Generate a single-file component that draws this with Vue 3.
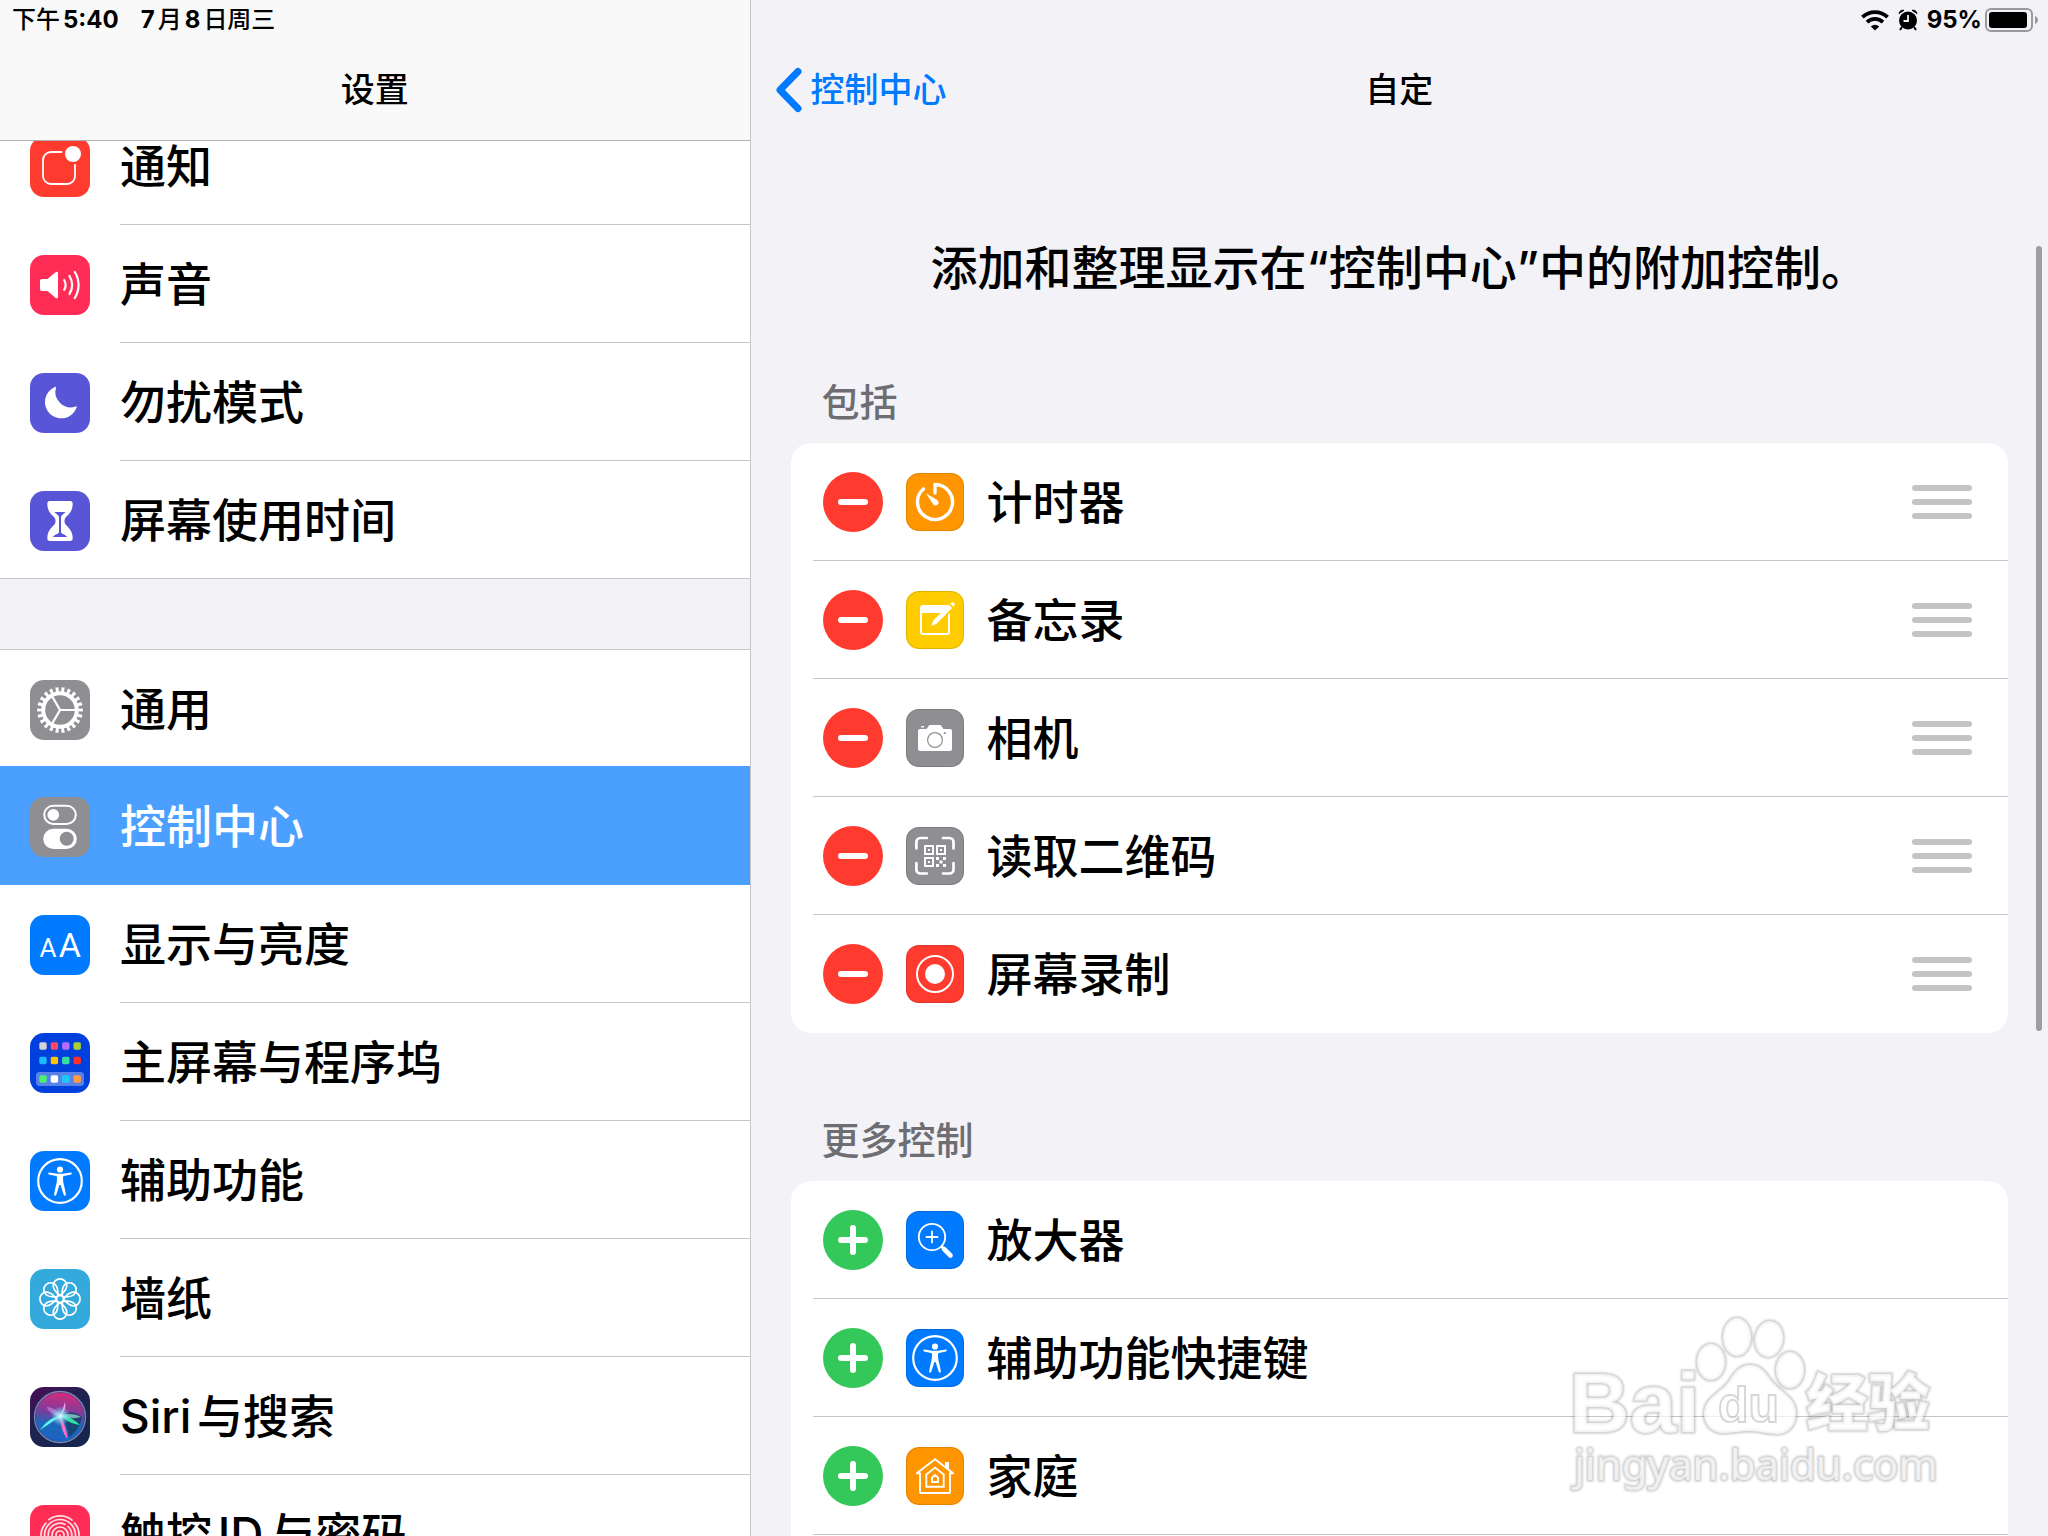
<!-- Settings, split view: category list on the left, the Control Center
     "customize" page on the right. -->
<template>
  <div class="settings">
    <aside class="sidebar">
      <header class="side-head">
        <div class="status">
          <span>下午<b>5:40</b></span>
          <span><b>7</b>月<b>8</b>日周三</span>
        </div>
        <h1 class="nav-title">设置</h1>
      </header>

      <nav class="side-scroll">
        <ul v-for="(group, i) in groups" :key="i" class="side-group">
          <li v-for="item in group" :key="item.icon">
            <a
              href="#"
              class="side-row"
              :class="{ 'side-row--active': item.icon === active }"
              @click.prevent="active = item.icon"
            >
              <svg class="side-icon" viewBox="0 0 60 60" aria-hidden="true" v-html="sideIcons[item.icon]" />
              <span class="side-label">{{ item.label }}</span>
            </a>
          </li>
        </ul>
      </nav>
    </aside>

    <main class="detail">
      <header class="detail-head">
        <div class="status status--right">
          <svg width="28" height="22" viewBox="0 0 28 22" aria-hidden="true">
            <g fill="none" stroke="#000" stroke-width="3.8">
              <path d="M1.4 8.2a18 18 0 0 1 25.2 0" />
              <path d="M6 13.200a11.400 11.400 0 0 1 16 0" />
            </g>
            <path d="M14 21.6l-4.2-4.2a6 6 0 0 1 8.400 0z" />
          </svg>
          <svg class="alarm" width="20" height="22" viewBox="0 0 20 22" aria-hidden="true">
            <circle cx="10" cy="11.500" r="9" />
            <path d="M1 4.500a4 4 0 0 1 5-3.200zM19 4.500a4 4 0 0 0-5-3.200z" stroke="#000" stroke-width="1" />
            <path d="M4 18l-2 3M16 18l2 3" stroke="#000" stroke-width="2" />
            <path d="M10 6v6H5.500" fill="none" stroke="#f2f2f7" stroke-width="1.800" />
          </svg>
          <b>95%</b>
          <svg width="53" height="24" viewBox="0 0 53 24" aria-hidden="true">
            <rect x="1" y="1" width="46" height="22" rx="5" fill="none" stroke="#9a9a9e" stroke-width="2" />
            <rect x="4" y="4" width="38" height="16" rx="3" />
            <path d="M50 8c2 .8 3 2.200 3 4s-1 3.200-3 4z" fill="#9a9a9e" />
          </svg>
        </div>
        <div class="nav-bar">
          <button type="button" class="back">
            <svg width="28" height="46" viewBox="0 0 28 46" aria-hidden="true">
              <path d="M23 4.500L5 23l18 18.500" fill="none" stroke="#007aff" stroke-width="7" stroke-linecap="round" stroke-linejoin="round" />
            </svg>
            控制中心
          </button>
          <h2 class="nav-title">自定</h2>
        </div>
      </header>

      <p class="intro">添加和整理显示在“控制中心”中的附加控制。</p>

      <section v-for="section in sections" :key="section.title" class="section">
        <h3 class="section-title">{{ section.title }}</h3>
        <ul class="card">
          <li v-for="item in section.items" :key="item.icon" class="card-row">
            <button
              type="button"
              class="toggle"
              :class="section.included ? 'toggle--remove' : 'toggle--add'"
              :aria-label="(section.included ? '移除' : '添加') + item.label"
            />
            <svg class="card-icon" viewBox="0 0 58 58" aria-hidden="true" v-html="controlIcons[item.icon]" />
            <span class="card-label">{{ item.label }}</span>
            <button v-if="section.included" type="button" class="grip" :aria-label="'移动' + item.label">
              <i /><i /><i />
            </button>
          </li>
        </ul>
      </section>

      <div class="scrollbar" />

      <svg class="watermark" width="400" height="190" viewBox="0 0 400 190" aria-hidden="true">
        <defs>
          <filter id="soft" x="-5%" y="-5%" width="110%" height="110%">
            <feGaussianBlur stdDeviation="1" />
          </filter>
          <g id="mark">
            <text x="9" y="127" class="wm-latin" font-size="84">Bai</text>
            <ellipse cx="151" cy="57" rx="14" ry="18" />
            <ellipse cx="177" cy="32" rx="14" ry="19" />
            <ellipse cx="209" cy="34" rx="14" ry="18" transform="rotate(8 209 34)" />
            <ellipse cx="230" cy="65" rx="14" ry="18" />
            <path d="M190 60c-11 0-16 8-21 16-7 11-25 16-25 33 0 11 8 19 19 19 10 0 17-2 27-2s16 3 27 3c12 0 19-9 19-21 0-16-16-21-25-33-6-8-10-15-21-15z" />
            <text x="246" y="121" class="wm-cjk" font-size="62">经验</text>
            <text x="14" y="175" class="wm-url" font-size="42">jingyan.baidu.com</text>
          </g>
        </defs>
        <use href="#mark" fill="none" stroke="#000" stroke-opacity=".22" stroke-width="3" filter="url(#soft)" />
        <use href="#mark" fill="#fff" fill-opacity=".7" />
        <text x="158" y="117" class="wm-latin" font-size="50" fill="#fff" fill-opacity=".6" stroke="#000" stroke-opacity=".16" stroke-width="2">du</text>
      </svg>
    </main>
  </div>
</template>

<script setup>
import { ref } from 'vue'

const active = ref('control')

const groups = [
  [
    { icon: 'notify', label: '通知' },
    { icon: 'sound', label: '声音' },
    { icon: 'moon', label: '勿扰模式' },
    { icon: 'time', label: '屏幕使用时间' },
  ],
  [
    { icon: 'general', label: '通用' },
    { icon: 'control', label: '控制中心' },
    { icon: 'display', label: '显示与亮度' },
    { icon: 'home', label: '主屏幕与程序坞' },
    { icon: 'access', label: '辅助功能' },
    { icon: 'wallpaper', label: '墙纸' },
    { icon: 'siri', label: 'Siri与搜索' },
    { icon: 'touch', label: '触控ID与密码' },
  ],
]

const sections = [
  {
    title: '包括',
    included: true,
    items: [
      { icon: 'timer', label: '计时器' },
      { icon: 'notes', label: '备忘录' },
      { icon: 'camera', label: '相机' },
      { icon: 'qr', label: '读取二维码' },
      { icon: 'record', label: '屏幕录制' },
    ],
  },
  {
    title: '更多控制',
    included: false,
    items: [
      { icon: 'magnifier', label: '放大器' },
      { icon: 'access', label: '辅助功能快捷键' },
      { icon: 'house', label: '家庭' },
      { icon: 'stopwatch', label: '' },
    ],
  },
]

const tile = (color, art) => `<rect width="60" height="60" rx="14" fill="${color}"/>${art}`
const smallTile = (color, art) =>
  `<rect width="58" height="58" rx="13" fill="${color}"/>` +
  `<rect x=".5" y=".5" width="57" height="57" rx="12.5" fill="none" stroke="#000" stroke-opacity=".12"/>${art}`

const person =
  '<circle cx="30" cy="30" r="21.800" fill="none" stroke="#fff" stroke-width="2.200"/>' +
  '<circle cx="30" cy="18.500" r="3.100" fill="#fff"/>' +
  '<path fill="#fff" d="M19.300 21.500l8 1.300h5.400l8-1.300c1.200-.2 1.500 1.600.3 1.900l-7 1.700c-.8.2-1 .6-1 1.400 0 4 .5 6 1.300 9l1.600 7.800c.3 1.500-1.700 1.900-2.200.5L30.600 34h-1.200l-3.100 9.800c-.5 1.400-2.500 1-2.200-.5l1.600-7.800c.8-3 1.300-5 1.300-9 0-.8-.2-1.200-1-1.400l-7-1.700c-1.200-.3-.9-2.100.3-1.900z"/>'

// home screen miniature: three rows of four apps, the last one in the dock
const apps = [
  [9.3, ['#d4d4d4', '#ff4b61', '#b66dff', '#a9d130']],
  [23.8, ['#1cb8ff', '#ffc400', '#3edc9c', '#ff3126']],
  [42.3, ['#4cf070', '#ffffff', '#1bcbff', '#ff9c42']],
]
const appDots = apps
  .map(([y, row]) => row.map((c, i) => `<rect x="${9.3 + i * 11.4}" y="${y}" width="7.400" height="7.400" rx="1.700" fill="${c}"/>`).join(''))
  .join('')

const petals = Array.from({ length: 8 }, (_, i) =>
  `<path transform="rotate(${i * 45} 30 30)" d="M30 26.500c-4.500-3.500-6.800-6.500-6.800-10a6.800 6.600 0 0 1 13.600 0c0 3.500-2.300 6.500-6.800 10z"/>`
).join('')

const sideIcons = {
  notify: tile('#ff3b30',
    '<path d="M32.300 15H21a8 8 0 0 0-8 8v16a8 8 0 0 0 8 8h16a8 8 0 0 0 8-8V27.300" fill="none" stroke="#fff" stroke-width="1.800"/>' +
    '<circle cx="43" cy="17" r="8" fill="#fff"/>'),
  sound: tile('#ff2d55',
    '<path fill="#fff" d="M12 24h5.500l8-6.800c1.300-1 2.500-.6 2.500.8v24c0 1.400-1.200 1.800-2.500.8l-8-6.800H12c-1.300 0-2-.7-2-2v-8c0-1.300.7-2 2-2z"/>' +
    '<g fill="none" stroke="#fff" stroke-width="2.200" stroke-linecap="round"><path d="M34.200 25.200c1.800 3 1.800 6.600 0 9.600"/><path d="M39.500 21c3.200 5.500 3.200 12.500 0 18"/><path d="M44.800 17c5 8 5 18 0 26"/></g>'),
  moon: tile('#5856d6',
    '<path fill="#fff" d="M25 14a16.300 16.300 0 1 0 21.600 20.500c.3-1-.2-1.400-1-1A15.400 15.400 0 0 1 26 14.600c.3-.8-.2-1-1-.6z"/>'),
  time: tile('#5856d6',
    '<path fill="#fff" d="M20 10h20c2 0 2.700 1.200 2.700 3 0 5-2 8.500-5.700 12-2 2-2.500 3-2.500 5s.5 3 2.500 5c3.700 3.500 5.700 7 5.700 12 0 1.800-.7 3-2.700 3H20c-2 0-2.700-1.200-2.700-3 0-5 2-8.500 5.700-12 2-2 2.500-3 2.500-5s-.5-3-2.500-5c-3.700-3.500-5.700-7-5.700-12 0-1.800.7-3 2.700-3z"/>' +
    '<path fill="#5856d6" d="M24.500 21h11c-.6 1.500-4.200 2.500-4.500 5v15.500c1 1.800 5 2.200 6 4.500H23c1-2.300 5-2.700 6-4.500V26c-.3-2.500-3.900-3.500-4.500-5z"/>'),
  general: tile('#8e8e93',
    '<g fill="none" stroke="#fff"><circle cx="30" cy="30" r="20.300" stroke-width="5.200" pathLength="220" stroke-dasharray="5.200 4.800" stroke-dashoffset="2.600"/>' +
    '<circle cx="30" cy="30" r="16.800" stroke-width="4"/><path stroke-width="2.200" d="M30 30h16M30 30l-8-13.900M30 30l-8 13.900"/></g>'),
  control: tile('#8e8e93',
    '<rect x="14.200" y="8.700" width="31.600" height="18.200" rx="9.100" fill="none" stroke="#fff" stroke-width="2"/><circle cx="23.300" cy="17.800" r="5.900" fill="#fff"/>' +
    '<rect x="13.200" y="31.700" width="33.600" height="20.200" rx="10.100" fill="#fff"/><circle cx="36.700" cy="41.800" r="7" fill="#8e8e93"/>'),
  display: tile('#007aff',
    '<g fill="#fff" font-family="Roboto, sans-serif" font-weight="400"><text x="9.500" y="42.300" font-size="26">A</text><text x="28.800" y="42.300" font-size="34">A</text></g>'),
  home: tile('#0040dd', '<rect x="6" y="39" width="48" height="14" rx="3.500" fill="#fff" fill-opacity=".35"/>' + appDots),
  access: tile('#007aff', person),
  wallpaper: tile('#34aadc', `<g fill="none" stroke="#fff" stroke-width="1.700">${petals}<circle cx="30" cy="30" r="3.500"/></g>`),
  siri:
    '<defs><linearGradient id="siri-bg" x1="0" y1="0" x2=".7" y2="1"><stop stop-color="#4a0d55"/><stop offset=".5" stop-color="#1d2350"/><stop offset="1" stop-color="#16264e"/></linearGradient>' +
    '<linearGradient id="siri-orb" x1=".5" y1="0" x2=".4" y2="1"><stop stop-color="#d42a7d"/><stop offset=".4" stop-color="#7a3d9b"/><stop offset=".65" stop-color="#1c67b8"/><stop offset="1" stop-color="#1c63c4"/></linearGradient>' +
    '<radialGradient id="siri-glow"><stop stop-color="#fff"/><stop offset=".3" stop-color="#9ff5ff" stop-opacity=".8"/><stop offset="1" stop-color="#6fd8ff" stop-opacity="0"/></radialGradient></defs>' +
    '<rect width="60" height="60" rx="14" fill="url(#siri-bg)"/><circle cx="30" cy="30" r="25.500" fill="#27386b" stroke="#7c88b5" stroke-width="1.300"/>' +
    '<circle cx="30" cy="30" r="24.500" fill="url(#siri-orb)"/>' +
    '<path d="M31 29c8-6 16-3 21 1-2 10-7 16-13 20-1-8-3-14-8-21z" fill="#16395e" fill-opacity=".75"/>' +
    '<path d="M31 29L10 43c5-7 11-13 21-14z" fill="#58f3ee"/><path d="M31 28c7 1 14 5 19 10-8-1-14-4-19-10z" fill="#2fe3a0"/>' +
    '<path d="M31 28c9-2 15-1 20 2-8 2-14 2-20-2z" fill="#8fe6d8" fill-opacity=".7"/>' +
    '<path d="M30 29c4 7 7 14 7.500 23-5-6-7-14-7.500-23z" fill="#ff6cc0"/><path d="M31 28l4-13c1 5 0 9-4 13z" fill="#f3a4e0"/><path d="M30 29c-3-6-8-9-13-9 1 5 6 8 13 9z" fill="#b878d8" fill-opacity=".8"/>' +
    '<circle cx="30.500" cy="29" r="10" fill="url(#siri-glow)"/>',
  touch: tile('#ff2d55',
    '<g fill="none" stroke="#fff" stroke-opacity=".85" stroke-width="1.700" stroke-linecap="round">' +
    '<path d="M19 14.500a19 19 0 0 1 23 .6"/><path d="M11 32a19 19 0 0 1 5-14"/><path d="M44.500 18a19 19 0 0 1 4.500 14v8"/>' +
    '<path d="M14.500 36v-6a15.500 15.500 0 0 1 31 0v12"/><path d="M18.200 40V30a11.800 11.800 0 0 1 17-10.600"/><path d="M38 21.500a11.800 11.800 0 0 1 3.800 8.500v14"/>' +
    '<path d="M22 42V30a8 8 0 0 1 16 0v14"/><path d="M26 46V30a4 4 0 0 1 8 0v16"/><path d="M30 30v16"/></g>'),
}

const qrBox = (x, y) =>
  `<rect x="${x + 1}" y="${y + 1}" width="8" height="8" fill="none" stroke="#fff" stroke-width="2"/><rect x="${x + 4}" y="${y + 4}" width="2" height="2" fill="#fff"/>`

const controlIcons = {
  timer: smallTile('#ff9500',
    '<path d="M29 20v-8.500A17.500 17.500 0 1 1 17.400 15.900" fill="none" stroke="#fff" stroke-width="3.400" stroke-linecap="round" stroke-linejoin="round"/>' +
    '<path d="M20 20.300l11.500 7a3 3 0 1 1-4.400 4z" fill="#fff"/>'),
  notes: smallTile('#ffcc00',
    '<rect x="15" y="15" width="28" height="28" rx="2" fill="none" stroke="#fff" stroke-width="2"/><path d="M15 15h28v7H15z" fill="#fff"/>' +
    '<path d="M24.500 36L45 15l3-4 3 2-4 4-20 19z" fill="#ffcc00" stroke="#ffcc00" stroke-width="3"/>' +
    '<path d="M25.300 35l2-5.500L43 13.800l3.200 3.200-15.700 15.700z" fill="#fff"/><path d="M44.200 12.600l.9-.9a2.300 2.300 0 0 1 3.200 3.200l-.9.900z" fill="#fff"/>'),
  camera: smallTile('#8e8e93',
    '<path d="M14 20h6.500l1.800-2.600c.6-1 1.200-1.400 2.500-1.400h8.400c1.300 0 1.900.4 2.500 1.400l1.800 2.600H44c1.300 0 2 .7 2 2v18c0 1.300-.7 2-2 2H14c-1.300 0-2-.7-2-2V22c0-1.300.7-2 2-2zM15.500 17h2.500v1.500h-3z" fill="#fff"/>' +
    '<circle cx="29" cy="31" r="7.400" fill="none" stroke="#8e8e93" stroke-width="1.200"/><circle cx="38.800" cy="24" r="1.100" fill="#8e8e93"/>'),
  qr: smallTile('#8e8e93',
    '<path d="M10.400 21.500V15a4 4 0 0 1 4-4h6.500M37 11h6.500a4 4 0 0 1 4 4v6.500M47.500 36v6.500a4 4 0 0 1-4 4H37M20.900 46.500h-6.500a4 4 0 0 1-4-4V36" fill="none" stroke="#fff" stroke-width="2.700" stroke-linecap="round"/>' +
    qrBox(18, 18) + qrBox(30, 18) + qrBox(18, 30) +
    '<path d="M30 30h3v3h-3zM37 30h3v3h-3zM33.500 33.500h3v3h-3zM30 37h3v3h-3zM37 37h3v3h-3z" fill="#fff"/>'),
  record: smallTile('#ff3b30',
    '<circle cx="29" cy="29" r="18" fill="none" stroke="#fff" stroke-width="2"/><circle cx="29" cy="29" r="10" fill="#fff"/>'),
  magnifier: smallTile('#007aff',
    '<g fill="none" stroke="#fff" stroke-linecap="round"><circle cx="26" cy="26" r="13.200" stroke-width="1.800"/><path d="M20.500 26h11M26 20.500v11" stroke-width="1.800"/>' +
    '<path d="M36 36l2 2" stroke-width="2.500"/><path d="M38 38l6.500 6.500" stroke-width="4.600"/></g>'),
  access: smallTile('#007aff', `<g transform="translate(-1 -1)">${person}</g>`),
  house: smallTile('#ff9500',
    '<g fill="none" stroke="#fff" stroke-width="1.900"><path d="M14 26v19c0 .8.2 1 1 1h28c.8 0 1-.2 1-1V26"/>' +
    '<path d="M14.500 26.300H10.800L29 12.300l18.200 14h-3.700" stroke-linejoin="round"/><path d="M20.300 39.800V27.500L29 20.600l8.700 6.900v12.300z"/><path d="M26 35v-4.500l3-2.500 3 2.500V35z"/></g>' +
    '<path d="M39 15h4v7.500l-4-3z" fill="#fff"/>'),
  stopwatch: smallTile('#ff9500', '<circle cx="29" cy="29" r="17" fill="none" stroke="#fff" stroke-width="2"/>'),
}
</script>

<style>
body {
  background: #f2f2f7;
}
</style>

<style scoped>
.settings {
  display: flex;
  height: 100vh;
  overflow: hidden;
  background: #f2f2f7;
  color: #000;
  font-family: Inter, 'Noto Sans CJK SC', sans-serif;
  font-size: 46px;
  font-weight: 500;
  text-autospace: normal;
}
h1, h2, h3, p, ul {
  margin: 0;
  padding: 0;
}
ul {
  list-style: none;
}
button {
  border: none;
  padding: 0;
  background: none;
  font: inherit;
  cursor: pointer;
}
.status {
  display: flex;
  align-items: center;
  gap: 22px;
  height: 40px;
  padding: 0 12px;
  font-size: 24px;
  line-height: 40px;
}
.status b {
  font-weight: 700;
}
.status--right {
  justify-content: flex-end;
  gap: 9px;
  padding-right: 10px;
}
.status--right b + svg {
  margin-left: -6px;
}
.nav-title {
  font-size: 34px;
  font-weight: 500;
  line-height: 100px;
  text-align: center;
}

/* sidebar */
.sidebar {
  display: flex;
  flex-direction: column;
  flex: 0 0 36.65%;
  box-sizing: border-box;
  border-right: 1px solid #c6c6c8;
}
.side-head {
  flex: none;
  height: 140px;
  border-bottom: 1px solid #b2b2b4;
  background: #f9f9f9;
}
.side-scroll {
  flex: 1;
  min-height: 0;
  overflow: hidden;
}
.side-group {
  background: #fff;
}
/* list is scrolled part of a row under the header */
.side-group:first-child {
  margin-top: -34px;
}
.side-group + .side-group {
  margin-top: 70px;
}
.side-row {
  display: flex;
  align-items: center;
  gap: 30px;
  box-sizing: border-box;
  height: 118px;
  padding-left: 30px;
  color: inherit;
  text-decoration: none;
}
.side-icon {
  flex: none;
  width: 60px;
  height: 60px;
  margin-top: 2px;
}
.side-label {
  flex: 1;
  align-self: stretch;
  border-bottom: 1px solid #c6c6c8;
  line-height: 119px;
  white-space: nowrap;
}
/* outer edges of a group run the full width */
.side-group + .side-group li:first-child .side-row {
  border-top: 1px solid #c6c6c8;
}
.side-group li:last-child .side-row {
  border-bottom: 1px solid #c6c6c8;
}
.side-group li:last-child .side-label {
  border-bottom: none;
}
.side-row--active {
  position: relative;
  background: #4ba0ff;
  box-shadow: 0 -1px 0 #4ba0ff;
  color: #fff;
}
.side-row--active .side-label {
  border-bottom-color: transparent;
}

/* detail pane */
.detail {
  position: relative;
  flex: 1;
  min-width: 0;
  overflow: hidden;
}
.nav-bar {
  display: grid;
  grid-template-columns: 1fr auto 1fr;
  align-items: center;
  height: 100px;
  padding: 0 24px;
}
.back {
  display: flex;
  align-items: center;
  gap: 8px;
  justify-self: start;
  color: #007aff;
  font-size: 34px;
  line-height: 100px;
}
.intro {
  padding-top: 92px;
  font-size: 47px;
  line-height: 72px;
  text-align: center;
}
.section {
  padding: 0 40px;
}
.section-title {
  height: 139px;
  box-sizing: border-box;
  padding: 70px 31px 0;
  color: #6d6d72;
  font-size: 38px;
  font-weight: 500;
  line-height: 56px;
}
.section + .section .section-title {
  height: 148px;
  padding-top: 79px;
}
.card {
  border-radius: 20px;
  background: #fff;
  overflow: hidden;
}
.card-row {
  display: flex;
  align-items: center;
  height: 118px;
  padding: 0 36px 0 32px;
  position: relative;
}
.card-row:not(:last-child)::after {
  content: '';
  position: absolute;
  left: 22px;
  right: 0;
  bottom: 0;
  height: 1px;
  background: #c6c6c8;
}
.toggle {
  position: relative;
  flex: none;
  width: 60px;
  height: 60px;
  border-radius: 50%;
}
.toggle--remove {
  background: #ff3b30;
}
.toggle--add {
  background: #34c759;
}
.toggle::before,
.toggle--add::after {
  content: '';
  position: absolute;
  left: 15px;
  top: 27px;
  width: 30px;
  height: 6px;
  border-radius: 3px;
  background: #fff;
}
.toggle--add::after {
  transform: rotate(90deg);
}
.card-icon {
  flex: none;
  width: 58px;
  height: 58px;
  margin: 0 23px;
}
.card-label {
  flex: 1;
  line-height: 118px;
}
.grip {
  display: flex;
  flex-direction: column;
  gap: 8px;
}
.grip i {
  width: 60px;
  height: 6px;
  border-radius: 3px;
  background: #c4c4c6;
}
.scrollbar {
  position: absolute;
  top: 16%;
  right: 6px;
  width: 6px;
  height: 51.1%;
  border-radius: 3px;
  background: #9e9ea0;
}

.watermark {
  position: absolute;
  right: 88px;
  bottom: 41px;
  pointer-events: none;
}
.wm-latin {
  font-family: 'Liberation Sans', Arial, sans-serif;
  font-weight: 700;
}
.wm-cjk {
  font-family: 'Noto Sans CJK SC', sans-serif;
  font-weight: 900;
}
.wm-url {
  font-family: 'Noto Sans', sans-serif;
  font-weight: 400;
}
</style>
